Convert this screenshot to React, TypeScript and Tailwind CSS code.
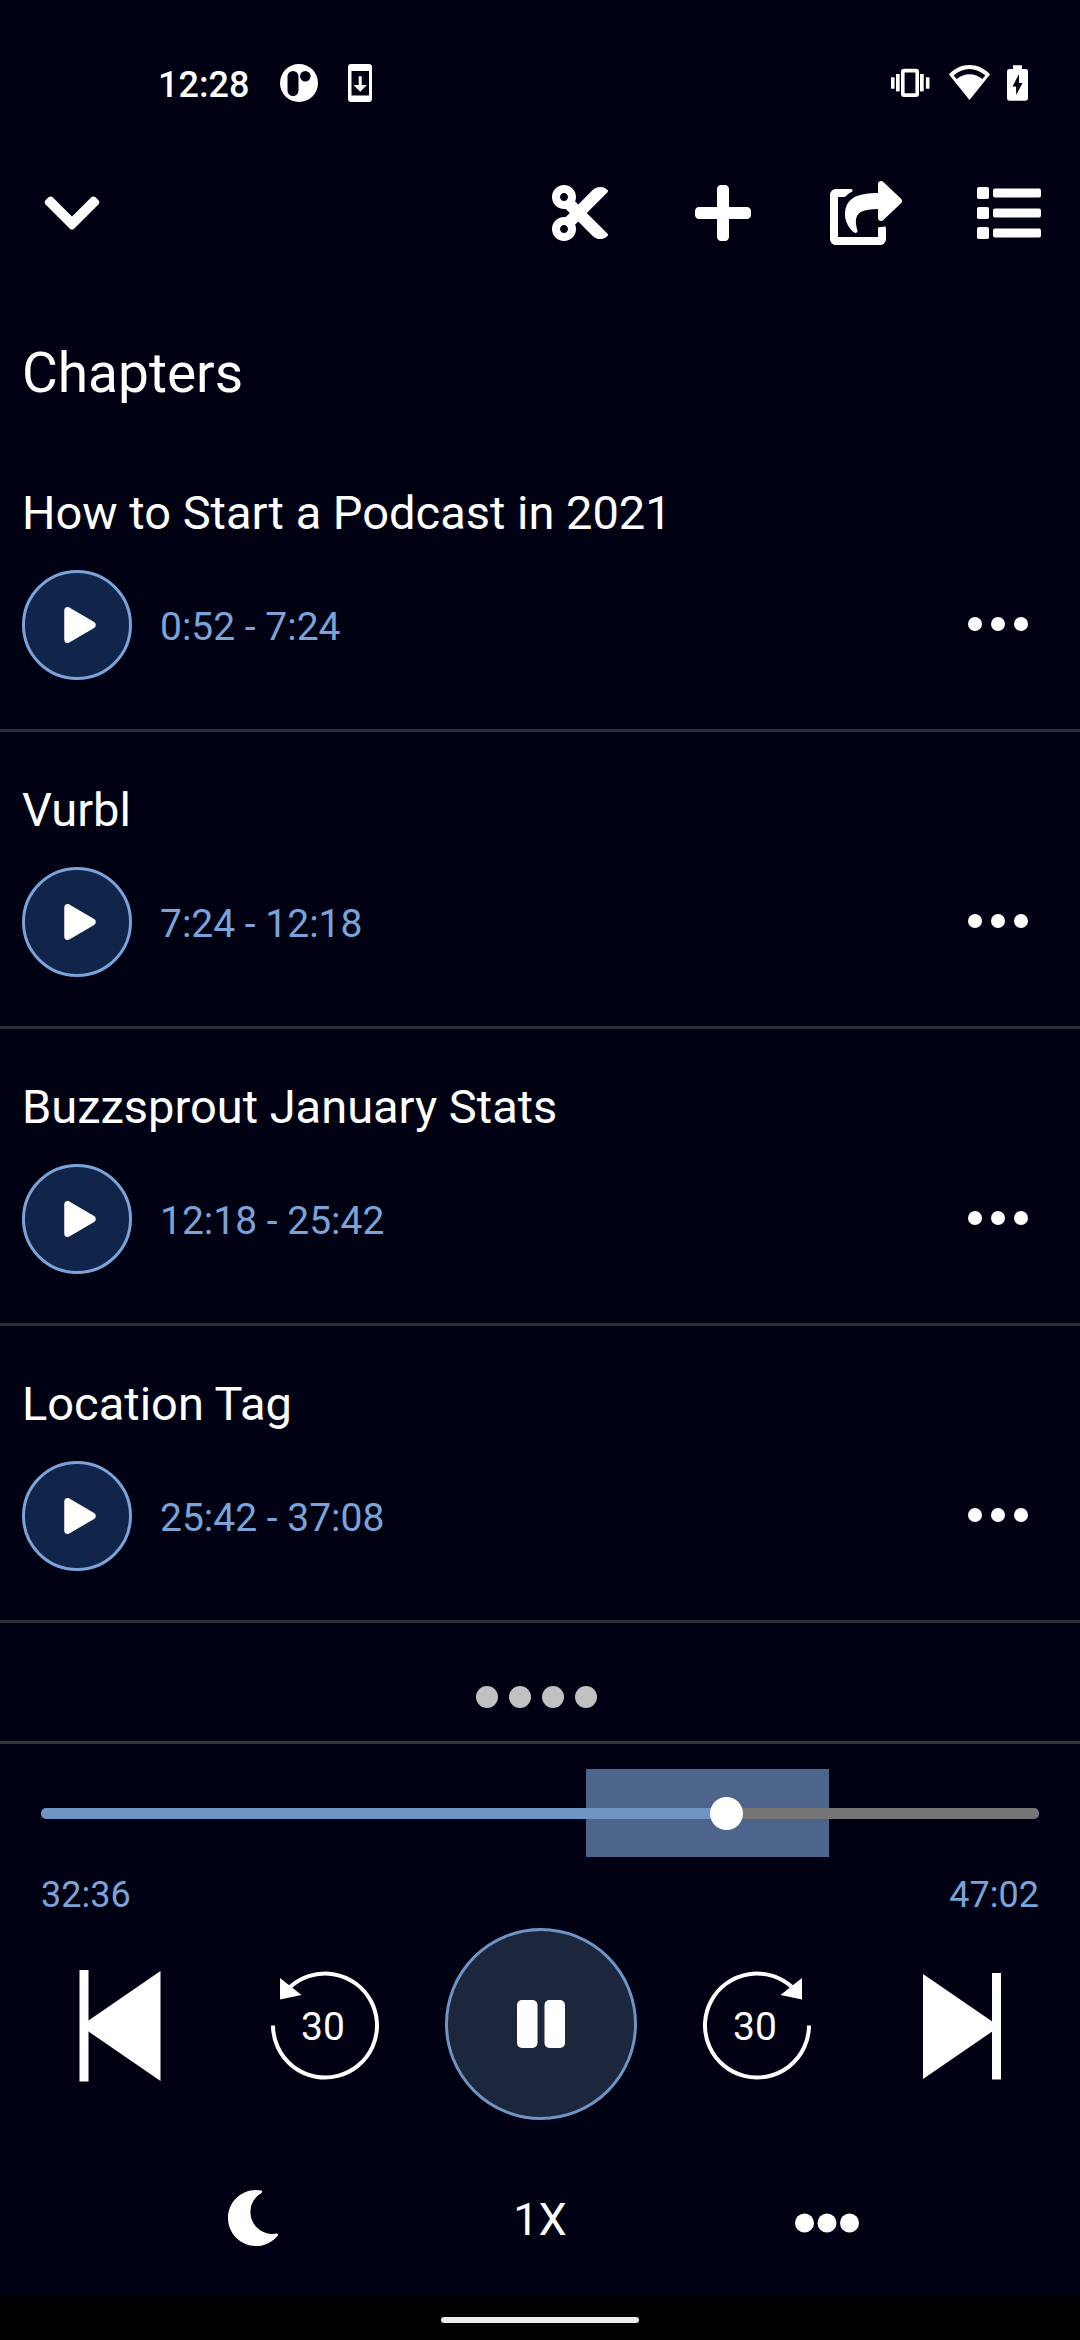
import { useState } from "react";
import { FaChevronDown, FaCut, FaMoon, FaPlay, FaPlus, FaShareSquare } from "react-icons/fa";

const chapters = [
  { title: "How to Start a Podcast in 2021", range: "0:52 - 7:24" },
  { title: "Vurbl", range: "7:24 - 12:18" },
  { title: "Buzzsprout January Stats", range: "12:18 - 25:42" },
  { title: "Location Tag", range: "25:42 - 37:08" },
];

const duration = 47 * 60 + 2;

function StatusBar() {
  return (
    <div className="flex h-[166px] items-center justify-between pl-[158px] pr-[52px]">
      <div className="flex items-center">
        <span className="pt-1 text-[36px] leading-[44px] font-medium">12:28</span>
        <svg className="ml-[31px] h-[38px] w-[38px]" viewBox="0 0 38 38" aria-hidden="true">
          <circle cx="19" cy="19" r="19" fill="#fff" />
          <rect x="7.5" y="7" width="11" height="25" rx="5.5" fill="#000214" />
          <circle cx="25.3" cy="12.3" r="5.3" fill="#000214" />
        </svg>
        <svg className="ml-[30px] h-[38px] w-[24px]" viewBox="0 0 24 38" fill="#fff" aria-hidden="true">
          <path
            fillRule="evenodd"
            d="M3 0h18a3 3 0 0 1 3 3v32a3 3 0 0 1-3 3H3a3 3 0 0 1-3-3V3a3 3 0 0 1 3-3zM3.5 7v24.5h17.5V7z"
          />
          <path d="M10.7 12.3h3V21h5.2l-6.7 6.7L5.5 21h5.2z" />
        </svg>
      </div>
      <svg className="h-[38px] w-[138px]" viewBox="890 64 138 38" fill="#fff" aria-hidden="true">
        <rect x="891" y="77.3" width="3.6" height="11.4" />
        <rect x="896" y="74" width="3.7" height="17.4" />
        <rect x="920" y="74" width="3.7" height="17.4" />
        <rect x="925.9" y="77.3" width="3.6" height="11.4" />
        <path
          fillRule="evenodd"
          d="M904 68.7h12a3 3 0 0 1 3 3V94a3 3 0 0 1-3 3h-12a3 3 0 0 1-3-3V71.7a3 3 0 0 1 3-3zM904.6 72.5v20.8h10.8V72.5z"
        />
        <path
          fillRule="evenodd"
          d="M949 74.4C960.5 62 978.5 62 990 74.4L969.5 100zM953.6 75.6l3.1 3.4C964 72.6 975 72.6 982.3 79l3.1-3.4C976 66.8 963 66.8 953.6 75.6z"
        />
        <path
          fillRule="evenodd"
          d="M1013 65.3h9V69h3.6a2.4 2.4 0 0 1 2.4 2.4v26.9a2.4 2.4 0 0 1-2.4 2.4h-16.2a2.4 2.4 0 0 1-2.4-2.4V71.4a2.4 2.4 0 0 1 2.4-2.4h3.6zM1019 74l-6.5 12.6h3.6V95l6.5-12h-3.6z"
        />
      </svg>
    </div>
  );
}

function Header() {
  return (
    <header className="flex h-[94px] items-center justify-between">
      <button aria-label="Close player" className="flex w-[143px] justify-center">
        <FaChevronDown className="size-16" />
      </button>
      <div className="flex">
        <button aria-label="Create clip" className="flex w-[143px] justify-center">
          <FaCut className="size-16" />
        </button>
        <button aria-label="Add to playlist" className="flex w-[143px] justify-center">
          <FaPlus className="size-16" />
        </button>
        <button aria-label="Share" className="flex w-[143px] justify-center">
          <FaShareSquare className="h-16 w-[72px]" />
        </button>
        <button aria-label="Queue" className="flex w-[143px] justify-center">
          <svg className="size-16" viewBox="0 0 512 512" fill="currentColor" aria-hidden="true">
            {[48, 208, 368].map((y) => (
              <g key={y}>
                <rect x="0" y={y} width="96" height="96" rx="14" />
                <rect x="128" y={y + 12} width="384" height="72" rx="16" />
              </g>
            ))}
          </svg>
        </button>
      </div>
    </header>
  );
}

function ChapterRow({ title, range }: { title: string; range: string }) {
  return (
    <li className="border-b-[3px] border-[#2c2c34] pt-[50px] pr-[52px] pb-[49px] pl-[22px]">
      <h3 className="text-[47px] leading-[56px]">{title}</h3>
      <div className="mt-[29px] flex items-center">
        <button
          aria-label={`Play ${title}`}
          className="flex size-[110px] items-center justify-center rounded-full border-[3px] border-[#7ba3d8] bg-[#11254b] pl-[5px]"
        >
          <FaPlay className="size-[36px]" />
        </button>
        <span className="ml-7 pt-1 text-[39px] leading-[46px] text-[#7ba3d8]">{range}</span>
        <button aria-label={`More options for ${title}`} className="ml-auto flex gap-[9px] pb-[2px]">
          <span className="size-[14px] rounded-full bg-white" />
          <span className="size-[14px] rounded-full bg-white" />
          <span className="size-[14px] rounded-full bg-white" />
        </button>
      </div>
    </li>
  );
}

function formatTime(seconds: number) {
  return `${Math.floor(seconds / 60)}:${String(seconds % 60).padStart(2, "0")}`;
}

function Scrubber() {
  const [position, setPosition] = useState(32 * 60 + 36);
  const filled = `${(position / duration) * 100}%`;
  return (
    <div className="px-[41px] pt-[25px]">
      <div className="relative flex h-[88px] items-center">
        <div className="absolute inset-y-0 left-[54.6%] w-[24.4%] bg-[#4d658b]" />
        <input
          type="range"
          aria-label="Playback position"
          min={0}
          max={duration}
          value={position}
          onChange={(e) => setPosition(Number(e.target.value))}
          style={{ backgroundImage: `linear-gradient(to right, #6e94c4 ${filled}, #767676 ${filled})` }}
          className="relative h-[11px] w-full appearance-none rounded-[5px] [&::-webkit-slider-thumb]:size-[33px] [&::-webkit-slider-thumb]:appearance-none [&::-webkit-slider-thumb]:rounded-full [&::-webkit-slider-thumb]:bg-white"
        />
      </div>
      <div className="mt-4 flex justify-between text-[36px] leading-[44px] text-[#7ba3d8]">
        <span>{formatTime(position)}</span>
        <span>{formatTime(duration)}</span>
      </div>
    </div>
  );
}

function SkipButton({ forward }: { forward?: boolean }) {
  return (
    <button
      aria-label={forward ? "Forward 30 seconds" : "Back 30 seconds"}
      className="grid w-[108px] place-items-center"
    >
      <svg className="h-[112px] w-[108px] [grid-area:1/1]" viewBox="0 0 108 112" aria-hidden="true">
        <g transform={forward ? "translate(108 0) scale(-1 1)" : undefined}>
          <path
            d="M2 57.5A52 52 0 1 0 18.5 19.5"
            fill="none"
            stroke="#fff"
            strokeWidth="4"
          />
          <path d="M9 10V31.5L30.5 27z" fill="#fff" />
        </g>
      </svg>
      <span className="pt-[6px] pr-1 text-[39px] leading-[46px] [grid-area:1/1]">30</span>
    </button>
  );
}

function Controls() {
  return (
    <div className="mt-[11px] flex items-center justify-between px-[79px]">
      <button aria-label="Previous track">
        <svg className="h-[116px] w-[82px]" viewBox="0 0 82 116" fill="#fff" aria-hidden="true">
          <rect x="0.5" y="4" width="9" height="111.5" />
          <path d="M1.5 60L81.5 5V115z" />
        </svg>
      </button>
      <div className="flex items-center gap-[66px]">
        <SkipButton />
        <button
          aria-label="Pause"
          className="flex size-[192px] items-center justify-center rounded-full border-[3px] border-[#6e94c4] bg-[#1c263d]"
        >
          <svg className="h-[48px] w-[48px]" viewBox="0 0 48 48" fill="#fff" aria-hidden="true">
            <rect x="0" y="0" width="20.5" height="48" rx="5" />
            <rect x="27.5" y="0" width="20.5" height="48" rx="5" />
          </svg>
        </button>
        <SkipButton forward />
      </div>
      <button aria-label="Next track">
        <svg className="h-[116px] w-[80px]" viewBox="0 0 80 116" fill="#fff" aria-hidden="true">
          <rect x="71" y="7" width="9" height="106.5" />
          <path d="M78.5 60.5L2 8V113z" />
        </svg>
      </button>
    </div>
  );
}

export default function App() {
  return (
    <div className="flex min-h-screen flex-col bg-[#000214] font-['Roboto',sans-serif] text-white">
      <StatusBar />
      <Header />
      <main>
        <h2 className="mt-[81px] pl-[22px] text-[55px] leading-[64px]">Chapters</h2>
        <ul className="mt-[30px]">
          {chapters.map((c) => (
            <ChapterRow key={c.title} {...c} />
          ))}
        </ul>
        <div className="flex justify-center gap-[11px] border-b-[3px] border-[#343434] pt-[63px] pr-2 pb-[33px]">
          {chapters.map((c) => (
            <span key={c.title} className="size-[22px] rounded-full bg-[#c1c1c1]" />
          ))}
        </div>
      </main>
      <section aria-label="Player">
        <Scrubber />
        <Controls />
        <div className="mt-[70px] grid h-[60px] grid-cols-3 items-center justify-items-center px-[110px]">
          <button aria-label="Sleep timer" className="self-start">
            <FaMoon className="size-14" />
          </button>
          <button className="text-[45px] leading-[52px]">1X</button>
          <button aria-label="More options" className="self-end">
            <svg className="h-[54px] w-[64px]" viewBox="0 0 64 54" fill="#fff" aria-hidden="true">
              <circle cx="9.5" cy="27" r="9.5" />
              <circle cx="32" cy="27" r="9.5" />
              <circle cx="54.5" cy="27" r="9.5" />
            </svg>
          </button>
        </div>
      </section>
      <div className="mt-auto flex h-[44px] items-center justify-center bg-black pt-1">
        <div className="h-[6px] w-[198px] rounded-full bg-[#ececec]" />
      </div>
    </div>
  );
}
